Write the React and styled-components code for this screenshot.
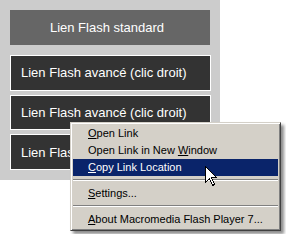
import styled, { createGlobalStyle } from 'styled-components'

const GlobalStyle = createGlobalStyle`
  html, body {
    margin: 0;
    padding: 0;
    background: #fff;
  }
  body {
    font-family: "Liberation Sans", Arial, sans-serif;
  }
`

const Stage = styled.div`
  position: relative;
  width: 286px;
  height: 234px;
  overflow: hidden;
`

const Panel = styled.div`
  width: 200px;
  height: 160px;
  padding: 10px;
  background: #cccccc;
  display: flex;
  flex-direction: column;
  gap: 4px;
`

const FlashButton = styled.div`
  box-sizing: border-box;
  display: flex;
  align-items: center;
  font-size: 13px;
  color: #fff;
  cursor: pointer;
  ${p => p.$standard ? `
    width: 200px;
    height: 35px;
    margin-bottom: 6px;
    justify-content: center;
    padding-right: 6px;
    background: #666666;
  ` : `
    width: 201px;
    height: 36px;
    padding-left: 10px;
    background: #333333;
    border: 1px solid #fff;
  `}
`

const Menu = styled.div`
  position: absolute;
  left: 70px;
  top: 122px;
  width: 211px;
  box-sizing: border-box;
  padding: 2px;
  background: #d4d0c8;
  border: 1px solid;
  border-color: #d4d0c8 #404040 #404040 #d4d0c8;
  box-shadow: inset 1px 1px #fff, inset -1px -1px #808080, 3px 3px 3px rgba(0, 0, 0, 0.45);
  font-size: 11px;
  color: #000;
`

const Item = styled.div`
  height: 17px;
  line-height: 17px;
  padding-left: 15px;
  white-space: nowrap;
  background: ${p => (p.$active ? '#0a246a' : 'transparent')};
  color: ${p => (p.$active ? '#fff' : '#000')};

  u {
    text-decoration: underline;
    text-underline-offset: 1px;
  }
`

const Separator = styled.div`
  margin: 3px 0 4px;
  border-top: 1px solid #808080;
  border-bottom: 1px solid #fff;
`

const Cursor = styled.svg`
  position: absolute;
  left: 205px;
  top: 166px;
`

export default function App() {
  return (
    <>
      <GlobalStyle />
      <Stage>
        <Panel>
          <FlashButton $standard>Lien Flash standard</FlashButton>
          <FlashButton>Lien Flash avancé (clic droit)</FlashButton>
          <FlashButton>Lien Flash avancé (clic droit)</FlashButton>
          <FlashButton>Lien Flash avancé (clic droit)</FlashButton>
        </Panel>
        <Menu>
          <Item><u>O</u>pen Link</Item>
          <Item>Open Link in New <u>W</u>indow</Item>
          <Item $active><u>C</u>opy Link Location</Item>
          <Separator />
          <Item><u>S</u>ettings...</Item>
          <Separator />
          <Item><u>A</u>bout Macromedia Flash Player 7...</Item>
        </Menu>
        <Cursor width="13" height="22" viewBox="0 0 13 22">
          <path
            d="M0.5 0.5 L0.5 16.5 L4.5 12.5 L7.5 19.5 L9.5 18.5 L6.5 11.5 L11.5 11.5 Z"
            fill="#fff"
            stroke="#000"
            strokeWidth="1"
            shapeRendering="crispEdges"
          />
        </Cursor>
      </Stage>
    </>
  )
}
